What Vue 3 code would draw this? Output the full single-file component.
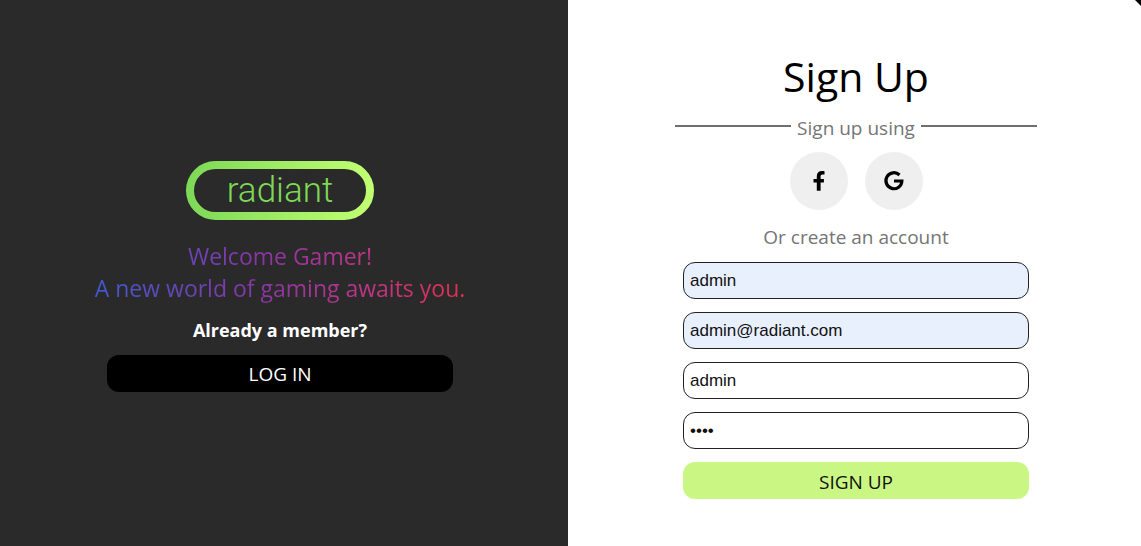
<script setup>
import { ref } from 'vue'

const username = ref('admin')
const email = ref('admin@radiant.com')
const displayName = ref('admin')
const password = ref('pass')
</script>

<template>
  <main class="page">
    <section class="welcome">
      <svg class="logo" viewBox="0 0 188 60" role="img" aria-label="radiant">
        <defs>
          <linearGradient id="logo-ring" x1="0" y1="0" x2="1" y2="0">
            <stop offset="0" stop-color="#7ed957" />
            <stop offset="1" stop-color="#c1ff72" />
          </linearGradient>
        </defs>
        <rect x="4" y="4" width="180" height="51" rx="25.5" fill="none" stroke="url(#logo-ring)" stroke-width="8" />
        <text class="logo-text" x="94" y="41" text-anchor="middle">radiant</text>
      </svg>
      <p class="tagline">Welcome Gamer!<br />A new world of gaming awaits you.</p>
      <p class="member">Already a member?</p>
      <button type="button" class="button login">LOG IN</button>
    </section>

    <section class="signup">
      <h1 class="title">Sign Up</h1>
      <div class="divider"><span>Sign up using</span></div>
      <div class="socials">
        <button type="button" class="social" aria-label="Facebook">
          <svg viewBox="0 0 24 24" width="24" height="24">
            <path d="M13.600 21.700v-8.100h3.300v-3.500h-3.300V7.600c0-1.300.5-2 1.900-2h2V2.200c-.6-.1-1.400-.2-2.400-.2-3.400 0-5.300 1.900-5.300 5.200v2.900H6.500v3.500h3.300v8.100z" />
          </svg>
        </button>
        <button type="button" class="social" aria-label="Google">
          <svg viewBox="0 0 24 24" width="24" height="24" fill="none">
            <path d="M17.500 6A8 8 0 1 0 19.900 12H12" stroke="#000" stroke-width="3.200" />
          </svg>
        </button>
      </div>
      <form class="form" @submit.prevent>
        <p class="hint">Or create an account</p>
        <input v-model="username" class="field filled" type="text" aria-label="Username" />
        <input v-model="email" class="field filled" type="email" aria-label="Email" />
        <input v-model="displayName" class="field" type="text" aria-label="Display name" />
        <input v-model="password" class="field" type="password" aria-label="Password" />
        <button type="submit" class="button submit">SIGN UP</button>
      </form>
    </section>
  </main>
</template>

<style>
body {
  margin: 0;
}
</style>

<style scoped>
.page {
  position: relative;
  display: grid;
  grid-template-columns: 568fr 573fr;
  min-height: 100vh;
  background: #fff;
  font-family: "Open Sans", "Noto Sans", sans-serif;
}

.page::after {
  content: "";
  position: absolute;
  top: 0;
  right: 0;
  width: 6px;
  height: 6px;
  background: #000;
  clip-path: polygon(0 0, 100% 0, 100% 100%);
}

.welcome,
.signup {
  box-sizing: border-box;
  display: flex;
  flex-direction: column;
  align-items: center;
}

.welcome {
  justify-content: center;
  padding: 6px 8px 0 0;
  background: #2a2a2a;
}

.signup {
  padding: 48px 0 0 3px;
}

p,
h1 {
  margin: 0;
}

.logo {
  width: 188px;
  height: 60px;
}

.logo-text {
  fill: #7ed957;
  font-family: Roboto, sans-serif;
  font-size: 35px;
  font-weight: 300;
}

.tagline {
  margin-top: 19px;
  background: linear-gradient(to right, #4158d0, #8a35a5 45%, #c13584 75%, #e1304c);
  background-clip: text;
  -webkit-background-clip: text;
  color: transparent;
  font-size: 23px;
  line-height: 32px;
  text-align: center;
}

.member {
  margin-top: 13px;
  color: #fff;
  font-size: 18px;
  font-weight: 700;
  line-height: 26px;
}

.button {
  box-sizing: border-box;
  width: 346px;
  height: 37px;
  padding: 2px 0 0;
  border: 0;
  border-radius: 12px;
  font-family: inherit;
  font-size: 19px;
}

.login {
  margin-top: 12px;
  background: #000;
  color: #fff;
}

.title {
  font-size: 41px;
  font-weight: 400;
  line-height: 56px;
}

.divider {
  display: flex;
  align-items: center;
  gap: 6px;
  width: 362px;
  margin-top: 12px;
  color: #757575;
  font-size: 19px;
  line-height: 24px;
}

.divider::before,
.divider::after {
  content: "";
  flex: 1;
  height: 2px;
  margin-bottom: 4px;
  background: #6e6e6e;
}

.socials {
  display: flex;
  gap: 17px;
  margin-top: 12px;
}

.social {
  display: grid;
  place-items: center;
  width: 58px;
  height: 58px;
  padding: 0;
  border: 0;
  border-radius: 50%;
  background: #efefef;
}

.form {
  display: flex;
  flex-direction: column;
  align-items: center;
  gap: 13px;
  margin-top: 15px;
}

.hint {
  color: #757575;
  font-size: 19px;
  line-height: 24px;
}

.field {
  box-sizing: border-box;
  width: 346px;
  height: 37px;
  padding: 0 6px;
  border: 1px solid #222;
  border-radius: 12px;
  background: #fff;
  color: #111;
  font-family: "Liberation Sans", Arial, sans-serif;
  font-size: 17px;
}

.filled {
  background: #e8f0fe;
}

.submit {
  background: #caf784;
  color: #111;
}
</style>
